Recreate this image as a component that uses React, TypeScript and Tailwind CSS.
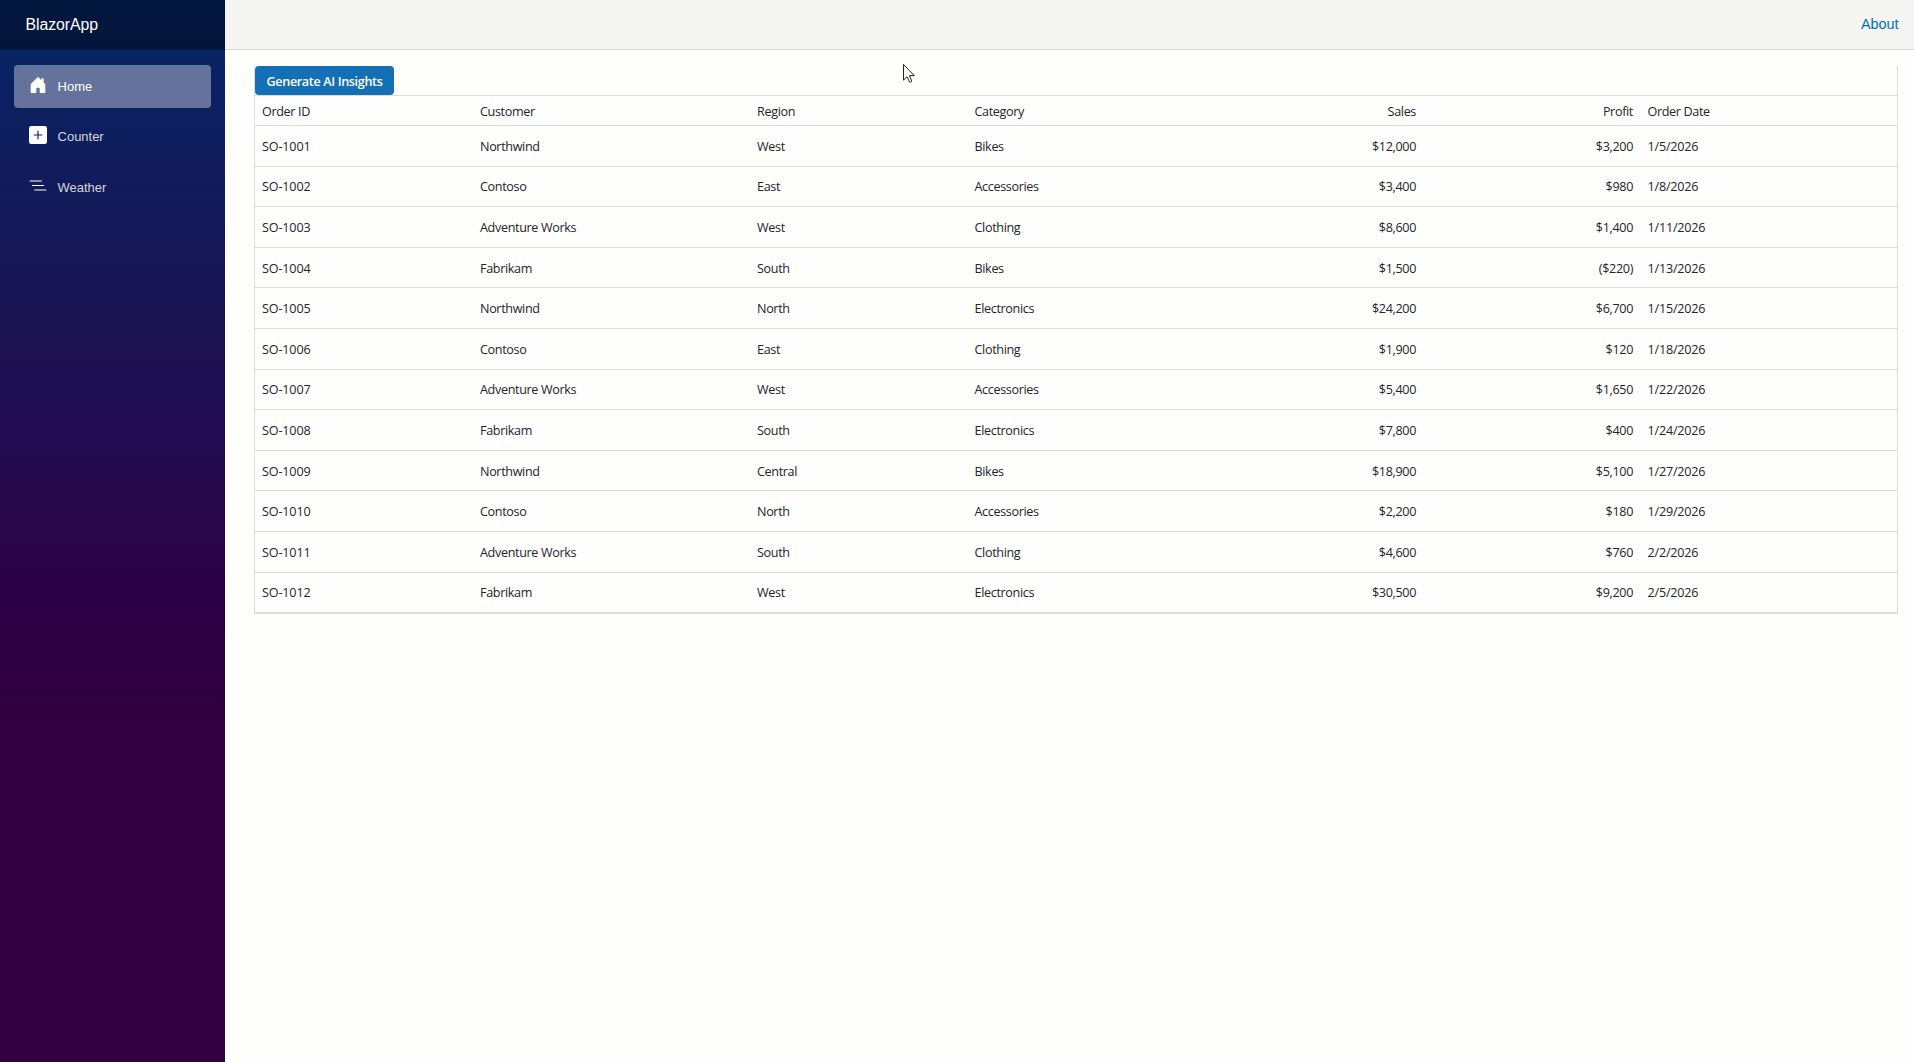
import type { ReactNode } from 'react';
import { clsx } from 'clsx';

const orders = [
  { id: 'SO-1001', customer: 'Northwind', region: 'West', category: 'Bikes', sales: 12000, profit: 3200, date: '1/5/2026' },
  { id: 'SO-1002', customer: 'Contoso', region: 'East', category: 'Accessories', sales: 3400, profit: 980, date: '1/8/2026' },
  { id: 'SO-1003', customer: 'Adventure Works', region: 'West', category: 'Clothing', sales: 8600, profit: 1400, date: '1/11/2026' },
  { id: 'SO-1004', customer: 'Fabrikam', region: 'South', category: 'Bikes', sales: 1500, profit: -220, date: '1/13/2026' },
  { id: 'SO-1005', customer: 'Northwind', region: 'North', category: 'Electronics', sales: 24200, profit: 6700, date: '1/15/2026' },
  { id: 'SO-1006', customer: 'Contoso', region: 'East', category: 'Clothing', sales: 1900, profit: 120, date: '1/18/2026' },
  { id: 'SO-1007', customer: 'Adventure Works', region: 'West', category: 'Accessories', sales: 5400, profit: 1650, date: '1/22/2026' },
  { id: 'SO-1008', customer: 'Fabrikam', region: 'South', category: 'Electronics', sales: 7800, profit: 400, date: '1/24/2026' },
  { id: 'SO-1009', customer: 'Northwind', region: 'Central', category: 'Bikes', sales: 18900, profit: 5100, date: '1/27/2026' },
  { id: 'SO-1010', customer: 'Contoso', region: 'North', category: 'Accessories', sales: 2200, profit: 180, date: '1/29/2026' },
  { id: 'SO-1011', customer: 'Adventure Works', region: 'South', category: 'Clothing', sales: 4600, profit: 760, date: '2/2/2026' },
  { id: 'SO-1012', customer: 'Fabrikam', region: 'West', category: 'Electronics', sales: 30500, profit: 9200, date: '2/5/2026' },
];

const columns = 'grid grid-cols-[218px_277px_217.5px_234.5px_221px_217px_1fr] items-center';

function currency(value: number) {
  const amount = '$' + Math.abs(value).toLocaleString('en-US');
  return value < 0 ? `(${amount})` : amount;
}

function Icon({ children }: { children: ReactNode }) {
  return (
    <svg viewBox="0 0 16 16" fill="currentColor" className="mb-[3px] h-[18px] w-[18px] shrink-0 text-white">
      {children}
    </svg>
  );
}

function NavItem({ label, icon, active }: { label: string; icon: ReactNode; active?: boolean }) {
  return (
    <a
      className={clsx(
        'flex h-[43.2px] items-center gap-[10.8px] rounded-[4px] pl-[14.4px] text-[12.96px]',
        active ? 'bg-white/37 text-white' : 'text-[#d7d7d7]'
      )}
    >
      <Icon>{icon}</Icon>
      <span>{label}</span>
    </a>
  );
}

function Sidebar() {
  return (
    <aside className="flex w-[225px] shrink-0 flex-col bg-[linear-gradient(180deg,#052767_0%,#141959_21%,#1b1250_31%,#200c53_40%,#270849_48%,#2c0147_56%,#330040_68%)]">
      <div className="flex h-[50px] items-center bg-black/40 pb-px pl-[25.5px] text-[15.84px] tracking-[-0.05px] text-white">BlazorApp</div>
      <nav className="flex flex-col gap-[7.4px] px-[14.4px] pt-[14.8px]">
        <NavItem
          active
          label="Home"
          icon={
            <path d="M6.5 14.5v-3.505c0-.245.25-.495.5-.495h2c.25 0 .5.25.5.5v3.5a.5.5 0 0 0 .5.5h4a.5.5 0 0 0 .5-.5v-7a.5.5 0 0 0-.146-.354L13 5.793V2.5a.5.5 0 0 0-.5-.5h-1a.5.5 0 0 0-.5.5v1.293L8.354 1.146a.5.5 0 0 0-.708 0l-6 6A.5.5 0 0 0 1.5 7.5v7a.5.5 0 0 0 .5.5h4a.5.5 0 0 0 .5-.5Z" />
          }
        />
        <NavItem
          label="Counter"
          icon={
            <path d="M2 0a2 2 0 0 0-2 2v12a2 2 0 0 0 2 2h12a2 2 0 0 0 2-2V2a2 2 0 0 0-2-2H2zm6.5 4.5v3h3a.5.5 0 0 1 0 1h-3v3a.5.5 0 0 1-1 0v-3h-3a.5.5 0 0 1 0-1h3v-3a.5.5 0 0 1 1 0z" />
          }
        />
        <NavItem
          label="Weather"
          icon={
            <path d="M4.5 11.5A.5.5 0 0 1 5 11h10a.5.5 0 0 1 0 1H5a.5.5 0 0 1-.5-.5zm-2-4A.5.5 0 0 1 3 7h10a.5.5 0 0 1 0 1H3a.5.5 0 0 1-.5-.5zm-2-4A.5.5 0 0 1 1 3h10a.5.5 0 0 1 0 1H1a.5.5 0 0 1-.5-.5z" />
          }
        />
      </nav>
    </aside>
  );
}

function OrdersGrid() {
  return (
    <div className="border-x border-b border-[#dcdcdc] font-['Open_Sans',sans-serif] text-[12.6px] tracking-[-0.35px] text-[#212529]">
      <div className="h-[30px] border-b border-[#dcdcdc]">
        <button className="flex h-[29px] w-[139px] items-center justify-center rounded-[4px] bg-[#156fb5] pt-[3px] text-[12.6px] font-semibold tracking-[-0.35px] text-white">
          Generate AI Insights
        </button>
      </div>
      <div className={clsx(columns, 'h-[30px] border-b border-[#dcdcdc] pt-[3px]')}>
        <span className="pl-[7px]">Order ID</span>
        <span className="pl-[7px]">Customer</span>
        <span className="pl-[7px]">Region</span>
        <span className="pl-[7px]">Category</span>
        <span className="pr-[7px] text-right">Sales</span>
        <span className="pr-[7px] text-right">Profit</span>
        <span className="pl-[7.5px]">Order Date</span>
      </div>
      {orders.map((order) => (
        <div key={order.id} className={clsx(columns, 'h-[40.6px] border-b border-[#dcdcdc] pt-[3px]')}>
          <span className="pl-[7px] tracking-[-0.15px]">{order.id}</span>
          <span className="pl-[7px]">{order.customer}</span>
          <span className="pl-[7px]">{order.region}</span>
          <span className="pl-[7px]">{order.category}</span>
          <span className="pr-[7px] text-right">{currency(order.sales)}</span>
          <span className="pr-[7px] text-right">{currency(order.profit)}</span>
          <span className="pl-[7.5px] tracking-[-0.2px]">{order.date}</span>
        </div>
      ))}
    </div>
  );
}

export default function App() {
  return (
    <div className="flex h-screen bg-[#fefefd] font-['Liberation_Sans',Arial,sans-serif]">
      <Sidebar />
      <main className="min-w-0 flex-1">
        <header className="flex h-[50px] items-center justify-end border-b border-[#d6d5d5] bg-[#f5f5f4] pr-[15.5px] text-[14.4px] text-[#0071b1]">
          <a>About</a>
        </header>
        <article className="pt-4 pr-4 pl-[29px]">
          <OrdersGrid />
        </article>
      </main>
      <svg viewBox="0 0 13 20" className="absolute top-[63px] left-[902px] h-5 w-[13px]">
        <path
          d="M1.5 1.5v15.6l3.5-3.3 2.5 5.2c.4.7 2.5-.1 2.2-1L7.5 12.6h4.8z"
          fill="white"
          stroke="#222"
          strokeWidth="1"
        />
      </svg>
    </div>
  );
}
